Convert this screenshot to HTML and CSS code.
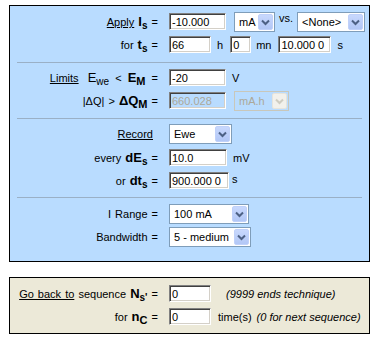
FILE: index.html
```html
<!DOCTYPE html>
<html lang="en">
<head>
  <meta charset="UTF-8" />
  <title>Technique settings</title>
  <link rel="stylesheet" href="styles.css">
</head>
<body>
  <div class="panel blue">
    <div class="row">
      <div class="lbl"><u>Apply</u> <b class="sym">I<sub>s</sub></b> =</div>
      <input class="txt" style="width:57px" value="-10.000" readonly>
      <div class="sel gap8" style="width:41px"><span class="val">mA</span><span class="btn"><svg width="15" height="16" viewBox="0 0 15 16"><path d="M4 6.5 L7.5 10 L11 6.5" fill="none" stroke="#4d6185" stroke-width="2"/></svg></span></div>
      <span class="vs">vs.</span>
      <div class="sel" style="width:68px"><span class="val">&lt;None&gt;</span><span class="btn"><svg width="15" height="16" viewBox="0 0 15 16"><path d="M4 6.5 L7.5 10 L11 6.5" fill="none" stroke="#4d6185" stroke-width="2"/></svg></span></div>
    </div>
    <div class="row">
      <div class="lbl">for <b class="sym">t<sub>s</sub></b> =</div>
      <input class="txt" style="width:42px" value="66" readonly>
      <span class="unit">h</span>
      <input class="txt gap7" style="width:21px" value="0" readonly>
      <span class="unit gap5">mn</span>
      <input class="txt gap7" style="width:53px" value="10.000 0" readonly>
      <span class="unit">s</span>
    </div>

    <div class="sep s1"></div>

    <div class="row">
      <div class="lbl spread"><u class="wide">Limits</u> <span class="big">E</span><sub>we</sub> &lt; <b class="sym">E<sub class="cap">M</sub></b> =</div>
      <input class="txt" style="width:57px" value="-20" readonly>
      <span class="unit">V</span>
    </div>
    <div class="row">
      <div class="lbl">|ΔQ| &gt; <b class="sym">ΔQ<sub class="cap">M</sub></b> =</div>
      <input class="txt off" style="width:57px" value="660.028" readonly>
      <div class="sel off gap8" style="width:55px"><span class="val">mA.h</span><span class="btn"><svg width="15" height="16" viewBox="0 0 15 16"><path d="M4 6.5 L7.5 10 L11 6.5" fill="none" stroke="#cfcdc2" stroke-width="2"/></svg></span></div>
    </div>

    <div class="sep s2"></div>

    <div class="row r5">
      <div class="lbl pad5"><u>Record</u></div>
      <div class="sel" style="width:63px"><span class="val">Ewe</span><span class="btn"><svg width="15" height="16" viewBox="0 0 15 16"><path d="M4 6.5 L7.5 10 L11 6.5" fill="none" stroke="#4d6185" stroke-width="2"/></svg></span></div>
    </div>
    <div class="row r6">
      <div class="lbl">every <b class="sym">dE<sub>s</sub></b> =</div>
      <input class="txt" style="width:58px" value="10.0" readonly>
      <span class="unit">mV</span>
    </div>
    <div class="row">
      <div class="lbl">or <b class="sym">dt<sub>s</sub></b> =</div>
      <input class="txt" style="width:60px" value="900.000 0" readonly>
      <span class="unit up">s</span>
    </div>

    <div class="sep s3"></div>

    <div class="row">
      <div class="lbl">I Range =</div>
      <div class="sel" style="width:80px"><span class="val">100 mA</span><span class="btn"><svg width="15" height="16" viewBox="0 0 15 16"><path d="M4 6.5 L7.5 10 L11 6.5" fill="none" stroke="#4d6185" stroke-width="2"/></svg></span></div>
    </div>
    <div class="row">
      <div class="lbl">Bandwidth =</div>
      <div class="sel" style="width:82px"><span class="val">5 - medium</span><span class="btn"><svg width="15" height="16" viewBox="0 0 15 16"><path d="M4 6.5 L7.5 10 L11 6.5" fill="none" stroke="#4d6185" stroke-width="2"/></svg></span></div>
    </div>
  </div>

  <div class="panel beige">
    <div class="row">
      <div class="lbl"><u>Go back to</u> sequence <b class="sym">N<sub>s'</sub></b> =</div>
      <input class="txt" style="width:42px" value="0" readonly>
      <i class="note gap15">(9999 ends technique)</i>
    </div>
    <div class="row">
      <div class="lbl">for <b class="sym">n<sub class="cap">C</sub></b> =</div>
      <input class="txt" style="width:42px" value="0" readonly>
      <span class="unit gap7">time(s)</span>
      <i class="note gap5">(0 for next sequence)</i>
    </div>
  </div>
</body>
</html>
```

FILE: styles.css
```css
body { margin: 0; background: #fff; font-family: "Liberation Sans", Arial, sans-serif; font-size: 11px; color: #000; }
.panel { box-sizing: border-box; width: 361px; margin-left: 9px; border: 1px solid #000; }
.blue { margin-top: 5px; background: #b9dcff; padding: 4px 0 13px; }
.beige { margin-top: 15px; background: #ece9d8; padding: 4px 0 5px; }
.row { display: flex; align-items: center; height: 23px; white-space: nowrap; }
.r5 { margin-top: 3px; }
.r6 { margin-top: 1px; }
.lbl { box-sizing: border-box; width: 148px; margin-right: 11px; text-align: right; word-spacing: 1px; }
.spread { word-spacing: 3px; }
.pad5 { padding-right: 5px; }
.wide { margin-right: 3px; }
.big { font-size: 13px; }
.sym { font-size: 13px; }
sub { font-size: 10px; vertical-align: -3px; line-height: 0; }
.sym sub.cap { font-size: 11px; }
.txt { box-sizing: border-box; height: 17px; margin: 0; padding: 0 2px; font-family: inherit; font-size: 11px; color: #000; background: #fff; border: 1px solid; border-color: #808080 #fff #fff #808080; box-shadow: inset 1px 1px 0 #404040, inset -1px -1px 0 #d4d0c8; outline: none; }
.txt.off { background: transparent; color: #aca899; }
.sel { box-sizing: border-box; height: 20px; display: flex; align-items: center; background: #fff; border: 1px solid #7f9db9; }
.sel .val { flex: 1; padding-left: 4px; overflow: hidden; }
.sel .btn { box-sizing: border-box; width: 15px; height: 16px; margin: 1px; border-radius: 2px; background: linear-gradient(#c8d8fd, #b2c7f6); border: 1px solid #c0d1fa; display: flex; }
.sel .btn svg { margin: -1px; }
.sel.off { background: transparent; border-color: #c9c7ba; color: #aca899; }
.sel.off .btn { background: #f2f1ec; border-color: #e6e4dc; }
.unit { margin-left: 6px; }
.note { margin-left: 5px; }
.up { align-self: flex-start; margin-top: 4px; margin-left: 3px; }
.vs { align-self: flex-start; margin: 2px 4px 0; }
.gap5 { margin-left: 5px; }
.gap7 { margin-left: 7px; }
.gap8 { margin-left: 8px; }
.gap15 { margin-left: 15px; }
.sep { height: 1px; background: #9ab0c6; margin: 0 7px; }
.s1 { margin-top: 6px; margin-bottom: 3px; }
.s2 { margin-top: 6px; }
.s3 { margin-top: 5px; margin-bottom: 4px; }
```
